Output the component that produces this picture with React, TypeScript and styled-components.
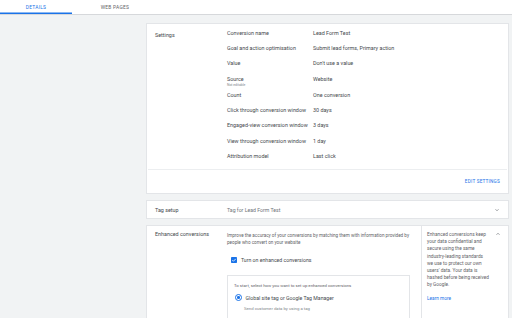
import React from 'react'
import styled, { createGlobalStyle } from 'styled-components'

const GlobalStyle = createGlobalStyle`
	html, body {
		margin: 0;
		padding: 0;
		background: #f1f3f4;
		font-family: Roboto, "Liberation Sans", Arial, sans-serif;
		-webkit-font-smoothing: antialiased;
	}
`

const Page = styled.div`
	width: 512px;
	height: 318px;
	overflow: hidden;
	background: #f1f3f4;
	color: #45494d;
`

const TabBar = styled.div`
	display: flex;
	height: 14px;
	background: #fff;
	border-bottom: 1px solid #d6d8db;
`

const Tab = styled.div<{ $active?: boolean; $width: number }>`
	width: ${(p) => p.$width}px;
	display: flex;
	align-items: center;
	justify-content: center;
	font-size: 4.9px;
	letter-spacing: 0.25px;
	text-transform: uppercase;
	color: ${(p) => (p.$active ? '#1a73e8' : '#5f6368')};
	box-shadow: ${(p) => (p.$active ? 'inset 0 -1.5px 0 #1a73e8' : 'none')};
`

const Content = styled.div`
	display: flex;
	flex-direction: column;
	gap: 6px;
	padding: 8px 3px 0 146px;
`

const Card = styled.div`
	background: #fff;
	border: 1px solid #e3e5e8;
	box-sizing: border-box;
`

const Body = styled.div`
	display: grid;
	grid-template-columns: 72px 1fr;
	padding: 1px 7px 6px 8px;
`

const Title = styled.div<{ $top?: number }>`
	font-size: 5.4px;
	line-height: 6px;
	padding-top: ${(p) => p.$top ?? 0}px;
`

const Row = styled.div<{ $tall?: boolean }>`
	display: grid;
	grid-template-columns: 86px 1fr;
	height: ${(p) => (p.$tall ? 16.5 : 15.2)}px;
	padding-top: 5px;
	box-sizing: border-box;
	font-size: 5.4px;
	line-height: 6px;
`

const Sub = styled.div`
	display: block;
	font-size: 3.4px;
	line-height: 4px;
	margin-top: 1.5px;
	color: #80868b;
`

const Footer = styled.div`
	display: flex;
	justify-content: flex-end;
	align-items: center;
	height: 23px;
	padding-right: 7px;
	border-top: 1px solid #eceef0;
	margin: 0 1px;
`

const LinkButton = styled.span`
	font-size: 4.7px;
	letter-spacing: 0.2px;
	text-transform: uppercase;
	color: #1a73e8;
`

const Strip = styled.div`
	display: grid;
	grid-template-columns: 72px 1fr auto;
	align-items: center;
	height: 17px;
	padding: 0 8px;
`

const Muted = styled.div`
	font-size: 5.2px;
	color: #70757a;
`

const Enhanced = styled.div`
	display: grid;
	grid-template-columns: 72px 194px 1fr;
	padding-left: 8px;
	height: 120px;
`

const Main = styled.div`
	padding-top: 6px;
	padding-right: 2px;
`

const Desc = styled.div`
	font-size: 4.6px;
	line-height: 7px;
	color: #5f6368;
`

const CheckRow = styled.div`
	display: flex;
	align-items: center;
	gap: 4px;
	margin: 11px 0 0 4px;
	font-size: 5.2px;
`

const Box = styled.div`
	margin-top: 12px;
	border: 1px solid #e3e5e8;
	border-bottom: none;
	margin-right: 9px;
	padding: 7px 6px 0;
	height: 60px;
`

const Hint = styled.div`
	font-size: 4.3px;
	color: #5f6368;
`

const RadioRow = styled.div`
	display: flex;
	align-items: center;
	gap: 3.5px;
	margin-top: 6px;
	margin-left: 1px;
	font-size: 5.2px;
`

const Radio = styled.span`
	width: 5px;
	height: 5px;
	border-radius: 50%;
	border: 1px solid #1a73e8;
	display: flex;
	align-items: center;
	justify-content: center;
	&::after {
		content: '';
		width: 2.6px;
		height: 2.6px;
		border-radius: 50%;
		background: #1a73e8;
	}
`

const RadioSub = styled.div`
	font-size: 4.3px;
	color: #80868b;
	margin: 5px 0 0 10px;
`

const Side = styled.div`
	display: flex;
	justify-content: space-between;
	border-left: 1px solid #e3e5e8;
	padding: 5px 7px 0 5px;
`

const SideText = styled.div`
	font-size: 4.75px;
	line-height: 7.2px;
	color: #5f6368;
	width: 62px;
`

const LearnMore = styled.div`
	margin-top: 6px;
	color: #1a73e8;
`

const Chevron = ({ up }: { up?: boolean }) => (
	<svg width="6" height="6" viewBox="0 0 24 24">
		<path
			d={up ? 'M6 15l6-6 6 6' : 'M6 9l6 6 6-6'}
			fill="none"
			stroke="#5f6368"
			strokeWidth="2.5"
		/>
	</svg>
)

const Checkbox = () => (
	<svg width="6" height="6" viewBox="0 0 12 12">
		<rect width="12" height="12" rx="1.5" fill="#1a73e8" />
		<path d="M2.6 6.2l2.3 2.3 4.6-4.8" fill="none" stroke="#fff" strokeWidth="1.6" />
	</svg>
)

const settings: [string, string, string?][] = [
	['Conversion name', 'Lead Form Test'],
	['Goal and action optimisation', 'Submit lead forms, Primary action'],
	['Value', "Don't use a value"],
	['Source', 'Website', 'Not editable'],
	['Count', 'One conversion'],
	['Click through conversion window', '30 days'],
	['Engaged-view conversion window', '3 days'],
	['View through conversion window', '1 day'],
	['Attribution model', 'Last click'],
]

export default function App() {
	return (
		<Page>
			<GlobalStyle />
			<TabBar>
				<Tab $active $width={72}>Details</Tab>
				<Tab $width={86}>Web pages</Tab>
			</TabBar>
			<Content>
				<Card>
					<Body>
						<Title $top={7}>Settings</Title>
						<div>
							{settings.map(([label, value, sub]) => (
								<Row key={label} $tall={!!sub}>
									<div>
										<div>{label}</div>
										{sub && <Sub>{sub}</Sub>}
									</div>
									<div>{value}</div>
								</Row>
							))}
						</div>
					</Body>
					<Footer>
						<LinkButton>Edit settings</LinkButton>
					</Footer>
				</Card>
				<Card>
					<Strip>
						<Title>Tag setup</Title>
						<Muted>Tag for Lead Form Test</Muted>
						<Chevron />
					</Strip>
				</Card>
				<Card>
					<Enhanced>
						<Title $top={5}>Enhanced conversions</Title>
						<Main>
							<Desc>
								Improve the accuracy of your conversions by matching them with information provided by
								people who convert on your website
							</Desc>
							<CheckRow>
								<Checkbox />
								Turn on enhanced conversions
							</CheckRow>
							<Box>
								<Hint>To start, select how you want to set up enhanced conversions</Hint>
								<RadioRow>
									<Radio />
									Global site tag or Google Tag Manager
								</RadioRow>
								<RadioSub>Send customer data by using a tag</RadioSub>
							</Box>
						</Main>
						<Side>
							<SideText>
								Enhanced conversions keep your data confidential and secure using the same
								industry-leading standards we use to protect our own users' data. Your data is
								hashed before being received by Google.
								<LearnMore>Learn more</LearnMore>
							</SideText>
							<Chevron up />
						</Side>
					</Enhanced>
				</Card>
			</Content>
		</Page>
	)
}
